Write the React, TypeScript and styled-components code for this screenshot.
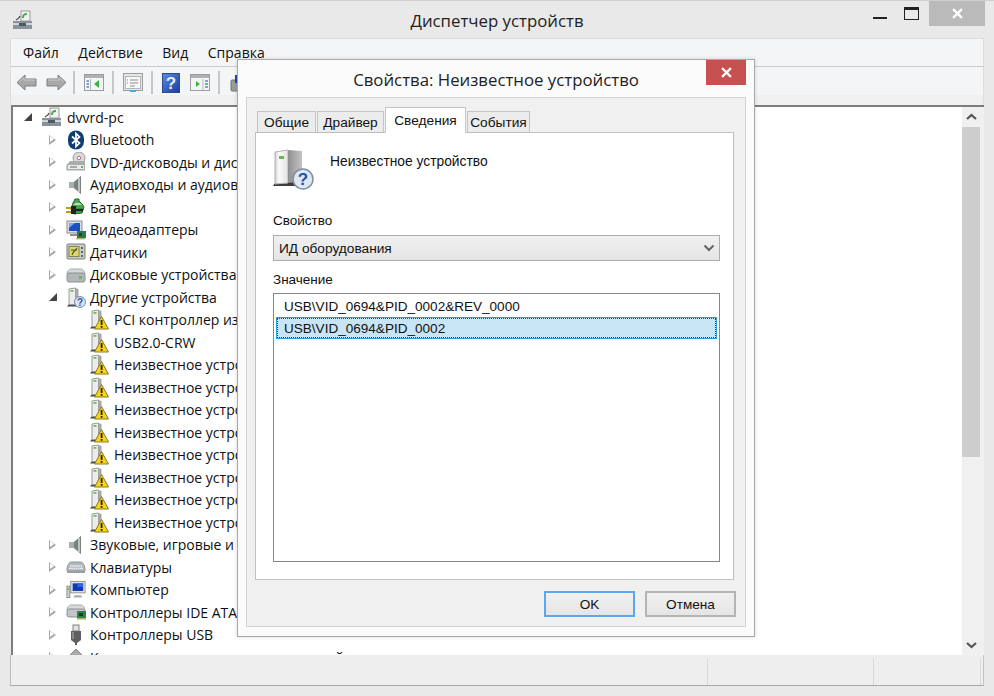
import { FC, ReactNode } from "react";
import styled, { createGlobalStyle } from "styled-components";

const GlobalStyle = createGlobalStyle`
  html, body {
    margin: 0;
    padding: 0;
    background: #e9e9e9;
  }
`;

type IconName =
  | "computer" | "bluetooth" | "dvd" | "audio" | "battery" | "video" | "sensor"
  | "disk" | "other" | "warn" | "sound" | "keyboard" | "pc" | "ide" | "usb" | "storage";

interface TreeRow {
  label: string;
  icon: IconName;
  level: 0 | 1 | 2;
  open?: boolean;
}

const unknown = "Неизвестное устройство";

const rows: TreeRow[] = [
  { label: "dvvrd-pc", icon: "computer", level: 0, open: true },
  { label: "Bluetooth", icon: "bluetooth", level: 1 },
  { label: "DVD-дисководы и дисководы компакт-дисков", icon: "dvd", level: 1 },
  { label: "Аудиовходы и аудиовыходы", icon: "audio", level: 1 },
  { label: "Батареи", icon: "battery", level: 1 },
  { label: "Видеоадаптеры", icon: "video", level: 1 },
  { label: "Датчики", icon: "sensor", level: 1 },
  { label: "Дисковые устройства", icon: "disk", level: 1 },
  { label: "Другие устройства", icon: "other", level: 1, open: true },
  { label: "PCI контроллер изохронной передачи", icon: "warn", level: 2 },
  { label: "USB2.0-CRW", icon: "warn", level: 2 },
  { label: unknown, icon: "warn", level: 2 },
  { label: unknown, icon: "warn", level: 2 },
  { label: unknown, icon: "warn", level: 2 },
  { label: unknown, icon: "warn", level: 2 },
  { label: unknown, icon: "warn", level: 2 },
  { label: unknown, icon: "warn", level: 2 },
  { label: unknown, icon: "warn", level: 2 },
  { label: unknown, icon: "warn", level: 2 },
  { label: "Звуковые, игровые и видеоустройства", icon: "sound", level: 1 },
  { label: "Клавиатуры", icon: "keyboard", level: 1 },
  { label: "Компьютер", icon: "pc", level: 1 },
  { label: "Контроллеры IDE ATA/ATAPI", icon: "ide", level: 1 },
  { label: "Контроллеры USB", icon: "usb", level: 1 },
  { label: "Контроллеры запоминающих устройств", icon: "storage", level: 1 },
];

const tabs = [
  { label: "Общие", width: 59 },
  { label: "Драйвер", width: 67 },
  { label: "Сведения", width: 81, active: true },
  { label: "События", width: 63 },
];

const Sketch: FC<{ size?: number; w?: number; h?: number; children: ReactNode }> = ({ size = 20, w, h, children }) => (
  <svg width={w ?? size} height={h ?? size} viewBox={`0 0 ${w ?? size} ${h ?? size}`} style={{ display: "block" }}>
    {children}
  </svg>
);

// tower with a green lamp, shared by the "unknown device" icons
const Tower = () => (
  <>
    <path d="M1 19.5 L3 17 H13 L14 19.5 Z" fill="#4a4a4a" />
    <path d="M3 2 L9.5 1 V17.5 H3 Z" fill="#ececec" stroke="#9a9a9a" strokeWidth="1" />
    <path d="M9.5 1 L12.5 2 V17 L9.5 17.5 Z" fill="#a8a8a8" />
    <rect x="4.5" y="3" width="3" height="1.8" fill="#6cc04a" />
  </>
);

const DeviceIcon: FC<{ name: IconName }> = ({ name }) => {
  switch (name) {
    case "computer":
      return (
        <Sketch w={21} h={20}>
          <rect x="9" y="1" width="9" height="10" fill="#f2f2f2" stroke="#9b9b9b" />
          <path d="M11 8 C11 4 13 4 15 4" fill="none" stroke="#4aa84a" strokeWidth="2" />
          <path d="M8 6 C7 9 5 9 4 10" fill="none" stroke="#555" strokeWidth="1.4" />
          <path d="M1 11 H20 V19 H1 Z" fill="#87929b" />
          <path d="M1 14 H20" stroke="#e6e9ea" strokeWidth="1.5" />
          <rect x="7" y="13" width="7" height="3" fill="#4e5a63" />
        </Sketch>
      );
    case "bluetooth":
      return (
        <Sketch w={18} h={20}>
          <rect x="1" y="0.5" width="16" height="19" rx="8" fill="#113e72" />
          <path d="M5 6.5 L12.5 13 L9 16.5 V3.5 L12.5 7 L5 13.5" fill="none" stroke="#fff" strokeWidth="1.7" />
        </Sketch>
      );
    case "dvd":
      return (
        <Sketch>
          <circle cx="13" cy="6" r="6" fill="#dcd7dc" stroke="#9b9b9b" />
          <circle cx="13" cy="6" r="1.7" fill="#fff" stroke="#a77" />
          <path d="M0.5 13 L4 9 H19 V18.5 H0.5 Z" fill="#a6adaa" />
          <rect x="2" y="13" width="16" height="4" fill="#e9ecea" />
          <rect x="4" y="14.5" width="7" height="1" fill="#666" />
          <rect x="15" y="14" width="2" height="2" fill="#62b34a" />
        </Sketch>
      );
    case "audio":
    case "sound":
      return (
        <Sketch w={16} h={20}>
          <path d="M1 7 H6 L13 1 V19 L6 13 H1 Z" fill="#a9aeae" />
          <path d="M6 7 L13 1 V19 L6 13 Z" fill="#7a7f80" />
          <path d="M11 3 V17" stroke="#d5d8d8" strokeWidth="1.5" />
        </Sketch>
      );
    case "battery":
      return (
        <Sketch>
          <path d="M9 2 H13 V4 L16 7 L18 10 L16 16 L8 17 L5 12 L7 6 Z" fill="#46a84c" stroke="#1e6a2a" />
          <path d="M7 8 C10 5 13 5 16 8" fill="#c8d6cc" />
          <path d="M0 11 H5 M0 15 H5" stroke="#b89a20" strokeWidth="2" />
          <path d="M5 9 H10 V17 H5 Z" fill="#222" />
          <path d="M10 13 H17" stroke="#222" strokeWidth="2.4" />
        </Sketch>
      );
    case "video":
      return (
        <Sketch w={20} h={20}>
          <rect x="1" y="1" width="15" height="12" fill="#d8dcdf" stroke="#8b8f92" />
          <rect x="3" y="3" width="11" height="8" fill="#1b4fc2" />
          <path d="M3 3 H9 L3 8 Z" fill="#79a7ec" />
          <path d="M4 15 H13" stroke="#8d9193" strokeWidth="2" />
          <rect x="11" y="11" width="9" height="7" fill="#2e7a4e" />
          <rect x="13" y="13" width="3" height="3" fill="#174a2c" />
          <rect x="10" y="18" width="9" height="1.4" fill="#c2b15a" />
        </Sketch>
      );
    case "sensor":
      return (
        <Sketch w={20} h={18}>
          <rect x="1" y="1" width="18" height="15" rx="1" fill="#c8cdc6" stroke="#7c807a" />
          <rect x="3" y="3.5" width="10" height="10" fill="#dcd968" stroke="#84845a" />
          <path d="M5 7 H11 M7 10 L11 5 M6 12 L8 8" stroke="#51512c" strokeWidth="1.2" />
          <rect x="15" y="4" width="2" height="2" fill="#666" />
          <rect x="15" y="8" width="2" height="2" fill="#666" />
          <rect x="15" y="12" width="2" height="2" fill="#666" />
        </Sketch>
      );
    case "disk":
      return (
        <Sketch w={20} h={16}>
          <path d="M1 7 C2 2 4 2 6 2 H14 C17 2 18 3 19 7 Z" fill="#d7dadc" stroke="#a5a9ac" />
          <rect x="1" y="6" width="18" height="9" rx="2" fill="#b2b7b9" stroke="#8c9093" />
          <rect x="13" y="9" width="3" height="3" fill="#67b84c" />
        </Sketch>
      );
    case "other":
      return (
        <Sketch w={20} h={21}>
          <Tower />
          <circle cx="14" cy="15" r="5.5" fill="#d8e2f0" stroke="#7d8ea6" />
          <text x="14" y="18.5" textAnchor="middle" fontSize="10" fontWeight="700" fontFamily="Liberation Sans" fill="#2b56a8">?</text>
        </Sketch>
      );
    case "warn":
      return (
        <Sketch w={20} h={21}>
          <Tower />
          <path d="M12.5 7.5 L19.5 20 H5.5 Z" fill="#f7d31a" stroke="#8a7a1c" strokeLinejoin="round" />
          <rect x="11.7" y="11" width="1.8" height="5" fill="#222" />
          <rect x="11.7" y="17" width="1.8" height="1.8" fill="#222" />
        </Sketch>
      );
    case "keyboard":
      return (
        <Sketch w={20} h={14}>
          <path d="M1 11 C1 5 3 2 6 2 H14 C17 2 19 5 19 11 Z" fill="#b3babf" stroke="#8e9499" />
          <path d="M4 6 H16 M3 8.5 H17" stroke="#eef0f2" strokeWidth="1.3" strokeDasharray="1.5 0.7" />
          <rect x="1" y="11" width="18" height="2" fill="#9aa0a5" />
        </Sketch>
      );
    case "pc":
      return (
        <Sketch w={21} h={20}>
          <rect x="1" y="6" width="3" height="12" fill="#d2d6d8" stroke="#87898b" />
          <rect x="1.8" y="8" width="1.4" height="2" fill="#5cb846" />
          <rect x="5" y="1" width="15" height="12" fill="#dfe2e4" stroke="#8e9295" />
          <rect x="7" y="3" width="11" height="8" fill="#1138b5" />
          <path d="M12 3 H18 V7 H12 Z" fill="#2f66df" />
          <path d="M9 15.5 H16 L17 18 H8 Z" fill="#a7abae" />
        </Sketch>
      );
    case "ide":
      return (
        <Sketch w={20} h={18}>
          <path d="M1 7 C2 2 4 2 6 2 H14 C17 2 18 3 19 7 Z" fill="#d8dbdd" stroke="#a5a9ac" />
          <rect x="1" y="6" width="18" height="8" rx="2" fill="#c2c6c9" stroke="#8c9093" />
          <rect x="11" y="8" width="9" height="7" fill="#2f7f50" />
          <rect x="13" y="10" width="4" height="3" fill="#123f22" />
          <rect x="11" y="15" width="9" height="1.6" fill="#c2b15a" />
        </Sketch>
      );
    case "usb":
      return (
        <Sketch w={12} h={22}>
          <rect x="3" y="1" width="6" height="6" fill="#e3e3e3" stroke="#7f7f7f" />
          <path d="M1 7 H11 V16 L7 19 V21 H5 V19 L1 16 Z" fill="#5d5f60" />
          <path d="M3 8 V15" stroke="#96999a" strokeWidth="1.5" />
        </Sketch>
      );
    case "storage":
      return (
        <Sketch w={18} h={18}>
          <path d="M9 1 L17 9 H1 Z" fill="#a9acae" stroke="#85888a" />
          <rect x="2" y="9" width="14" height="8" fill="#8f9396" />
        </Sketch>
      );
  }
};

const NavArrow: FC<{ flip?: boolean }> = ({ flip }) => (
  <svg width="21" height="17" viewBox="0 0 21 17" style={{ display: "block", transform: flip ? "scaleX(-1)" : undefined }}>
    <path d="M1 8.5 L9 1 V5 H20 V12 H9 V16 Z" fill="#a8a8a8" stroke="#7f7f7f" strokeLinejoin="round" />
    <path d="M3 8 L8 3.5 V6 H19" fill="none" stroke="#c9c9c9" />
  </svg>
);

const PaneIcon: FC<{ right?: boolean }> = ({ right }) => (
  <svg width="20" height="17" viewBox="0 0 20 17" style={{ display: "block" }}>
    <rect x="0.5" y="0.5" width="19" height="16" fill="#f4f5f5" stroke="#9a9c9e" />
    <rect x="1" y="1" width="18" height="3" fill="#aeb2b5" />
    {right ? (
      <>
        <path d="M6 7 L10 10 L6 13 Z" fill="#38b54a" />
        <path d="M13 5 V16" stroke="#b5b7b9" />
        <path d="M15 7 H18 M15 10 H18 M15 13 H18" stroke="#5d86bd" strokeWidth="1.5" />
      </>
    ) : (
      <>
        <path d="M6.5 5 V16" stroke="#b5b7b9" />
        <path d="M2.5 7 H5 M2.5 10 H5 M2.5 13 H5" stroke="#5d86bd" strokeWidth="1.5" />
        <path d="M15 6 L10 10 L15 14 Z" fill="#38b54a" />
      </>
    )}
  </svg>
);

const PropsIcon = () => (
  <svg width="20" height="20" viewBox="0 0 20 20" style={{ display: "block" }}>
    <rect x="0.5" y="0.5" width="19" height="17" fill="#e4e6e6" stroke="#9a9c9e" />
    <rect x="2.5" y="3.5" width="15" height="12" fill="#f7f7f7" stroke="#b3b5b6" />
    <path d="M7 7 H15 M7 10 H15 M7 13 H12" stroke="#8d9093" />
    <path d="M4 7 H5 M4 10 H5" stroke="#5d86bd" />
    <rect x="7" y="17" width="6" height="2" fill="#3db4e8" />
  </svg>
);

const HelpIcon = () => (
  <svg width="18" height="20" viewBox="0 0 18 20" style={{ display: "block" }}>
    <defs>
      <linearGradient id="helpFill" x1="0" y1="0" x2="1" y2="1">
        <stop offset="0" stopColor="#5c8fe0" />
        <stop offset="1" stopColor="#183c9c" />
      </linearGradient>
    </defs>
    <rect x="0.5" y="0.5" width="17" height="19" fill="url(#helpFill)" stroke="#2c4a94" />
    <text x="9" y="16" textAnchor="middle" fontSize="17" fontWeight="700" fontFamily="Liberation Sans" fill="#e8eef8">?</text>
  </svg>
);

const DeviceToolIcon = () => (
  <svg width="16" height="20" viewBox="0 0 16 20" style={{ display: "block" }}>
    <rect x="1" y="7" width="7" height="11" rx="1" fill="#9a9d9f" stroke="#6f7274" />
    <rect x="5" y="2" width="7" height="8" fill="#1d45b8" />
  </svg>
);

const BigDeviceIcon = () => (
  <svg width="42" height="42" viewBox="0 0 42 42" style={{ display: "block" }}>
    <defs>
      <linearGradient id="bigTower" x1="0" y1="0" x2="1" y2="0">
        <stop offset="0" stopColor="#cfcfcf" />
        <stop offset="0.3" stopColor="#fbfbfb" />
        <stop offset="1" stopColor="#e2e2e2" />
      </linearGradient>
      <linearGradient id="bigTowerSide" x1="0" y1="0" x2="1" y2="0">
        <stop offset="0" stopColor="#8f8f8f" />
        <stop offset="1" stopColor="#c4c4c4" />
      </linearGradient>
    </defs>
    <path d="M0 38 L4 32 H28 V38 Z" fill="#3c3c3c" />
    <path d="M2 4 L15 2 V35 L2 36 Z" fill="url(#bigTower)" stroke="#b4b4b4" />
    <path d="M15 2 L29 3 V33 L15 35 Z" fill="url(#bigTowerSide)" />
    <path d="M6 8 H11 V11 H6 Z" fill="#66b848" />
    <circle cx="30" cy="31" r="10" fill="#dfe7f2" stroke="#7f8ea3" strokeWidth="1.5" />
    <text x="30" y="37" textAnchor="middle" fontSize="17" fontWeight="700" fontFamily="Liberation Sans" fill="#2452a8">?</text>
  </svg>
);

const CloseGlyph: FC<{ size?: number }> = ({ size = 10 }) => (
  <svg width={size} height={size} viewBox="0 0 10 10" style={{ display: "block" }}>
    <path d="M1 1 L9 9 M9 1 L1 9" stroke="#fff" strokeWidth="2" />
  </svg>
);

const ScrollArrow: FC<{ down?: boolean }> = ({ down }) => (
  <svg width="11" height="8" viewBox="0 0 11 8" style={{ display: "block" }}>
    <path d={down ? "M1 2 L5.5 6 L10 2" : "M1 6 L5.5 2 L10 6"} fill="none" stroke="#555" strokeWidth="2.2" />
  </svg>
);

const App: FC = () => (
  <>
    <GlobalStyle />
    <Win>
      <TitleBar>
        <AppIcon>
          <DeviceIcon name="computer" />
        </AppIcon>
        <TitleText>Диспетчер устройств</TitleText>
        <Controls>
          <Minimize />
          <Maximize />
          <CloseBtn>
            <CloseGlyph size={11} />
          </CloseBtn>
        </Controls>
      </TitleBar>

      <Client>
        <MenuBar>
          <MenuItem>Файл</MenuItem>
          <MenuItem>Действие</MenuItem>
          <MenuItem>Вид</MenuItem>
          <MenuItem>Справка</MenuItem>
        </MenuBar>
        <Toolbar>
          <ToolSlot $w={30}><NavArrow /></ToolSlot>
          <ToolSlot $w={30}><NavArrow flip /></ToolSlot>
          <ToolSep $left={2} />
          <ToolSlot $w={37}><PaneIcon /></ToolSlot>
          <ToolSep />
          <ToolSlot $w={37}><PropsIcon /></ToolSlot>
          <ToolSep />
          <ToolSlot $w={36}><HelpIcon /></ToolSlot>
          <ToolSlot $w={22}><PaneIcon right /></ToolSlot>
          <ToolSep $left={7} />
          <ToolSlot $w={36}><DeviceToolIcon /></ToolSlot>
        </Toolbar>
        <ToolStrip />
        <TreeArea>
          <TreeList>
            {rows.map((row, i) => (
              <Row key={i} $level={row.level}>
                {row.level < 2 && <Expander $open={row.open} />}
                <IconBox $level={row.level}>
                  <DeviceIcon name={row.icon} />
                </IconBox>
                <RowLabel>{row.label}</RowLabel>
              </Row>
            ))}
          </TreeList>
          <ScrollBar>
            <ScrollBtn><ScrollArrow /></ScrollBtn>
            <ScrollThumb />
            <ScrollTrack />
            <ScrollBtn><ScrollArrow down /></ScrollBtn>
          </ScrollBar>
        </TreeArea>
        <StatusBar>
          <StatusCell $grow />
          <StatusCell $w={166} />
          <StatusCell $w={107} />
        </StatusBar>
      </Client>

      <Dialog>
        <DialogHead>
          <DialogTitle>Свойства: Неизвестное устройство</DialogTitle>
          <DialogClose>
            <CloseGlyph size={11} />
          </DialogClose>
        </DialogHead>
        <DialogBody>
          <TabRow>
            {tabs.map((tab) => (
              <Tab key={tab.label} $w={tab.width} $active={tab.active}>
                {tab.label}
              </Tab>
            ))}
          </TabRow>
          <TabPanel>
            <DeviceHead>
              <BigDeviceIcon />
              <DeviceName>Неизвестное устройство</DeviceName>
            </DeviceHead>
            <FieldLabel>Свойство</FieldLabel>
            <SelectBox>
              <span>ИД оборудования</span>
              <svg width="12" height="8" viewBox="0 0 12 8">
                <path d="M1.5 1.5 L6 6 L10.5 1.5" fill="none" stroke="#666" strokeWidth="2" />
              </svg>
            </SelectBox>
            <ValueLabel>Значение</ValueLabel>
            <ListBox>
              <ListRow>USB\VID_0694&amp;PID_0002&amp;REV_0000</ListRow>
              <ListRow $selected>USB\VID_0694&amp;PID_0002</ListRow>
            </ListBox>
          </TabPanel>
          <ButtonRow>
            <DlgButton $primary>OK</DlgButton>
            <DlgButton>Отмена</DlgButton>
          </ButtonRow>
        </DialogBody>
      </Dialog>
    </Win>
  </>
);

const uiFont = `"Open Sans", "Noto Sans", sans-serif`;
const dlgFont = `"Liberation Sans", Arial, sans-serif`;

const Win = styled.div`
  position: relative;
  width: 994px;
  height: 696px;
  box-sizing: border-box;
  display: flex;
  flex-direction: column;
  background: #e9e9e9;
  border-top: 1px solid #cfcfcf;
  overflow: hidden;
  font-family: ${uiFont};
  color: #111;
`;

const TitleBar = styled.div`
  position: relative;
  height: 37px;
  flex: none;
  display: flex;
  align-items: flex-start;
  justify-content: center;
`;

const AppIcon = styled.div`
  position: absolute;
  left: 12px;
  top: 9px;
`;

const TitleText = styled.div`
  margin-top: 8px;
  font-size: 16.8px;
  line-height: 24px;
  color: #222;
`;

const Controls = styled.div`
  position: absolute;
  right: 9px;
  top: 0;
  display: flex;
  align-items: flex-start;
`;

const Minimize = styled.div`
  width: 14px;
  height: 2px;
  margin: 16px 17px 0 0;
  background: #222;
`;

const Maximize = styled.div`
  width: 13px;
  height: 9px;
  margin: 6px 10px 0 0;
  border: 1px solid #222;
  border-top-width: 3px;
`;

const CloseBtn = styled.div`
  width: 56px;
  height: 25px;
  background: #bababa;
  display: flex;
  align-items: center;
  justify-content: center;
`;

const Client = styled.div`
  flex: 1;
  min-height: 0;
  display: flex;
  flex-direction: column;
  margin: 0 10px 10px;
  border-top: 1px solid #dcdde0;
`;

const MenuBar = styled.div`
  height: 27px;
  flex: none;
  display: flex;
  align-items: center;
  gap: 19.5px;
  padding-left: 12px;
  background: #f4f5f7;
  border-left: 1px solid #dcdde0;
  border-right: 1px solid #dcdde0;
  border-bottom: 1px solid #c9cbce;
`;

const MenuItem = styled.span`
  font-size: 14px;
`;

const Toolbar = styled.div`
  height: 28px;
  flex: none;
  box-sizing: border-box;
  padding-top: 3px;
  display: flex;
  align-items: center;
  background: #f4f5f7;
  border-left: 1px solid #dcdde0;
  border-right: 1px solid #dcdde0;
`;

const ToolSlot = styled.div<{ $w: number }>`
  width: ${(p) => p.$w}px;
  flex: none;
  display: flex;
  justify-content: center;
`;

const ToolSep = styled.div<{ $left?: number }>`
  width: 2px;
  height: 23px;
  flex: none;
  margin-left: ${(p) => p.$left ?? 0}px;
  background: #c4c6c8;
`;

const ToolStrip = styled.div`
  height: 10px;
  flex: none;
  background: #f0f0f0;
  border-left: 1px solid #dcdde0;
  border-right: 1px solid #dcdde0;
`;

const TreeArea = styled.div`
  flex: 1;
  min-height: 0;
  display: flex;
  background: #fff;
  border-top: 2px solid #7d7d7d;
  border-left: 2px solid #7d7d7d;
  margin-left: 1px;
`;

const TreeList = styled.div`
  flex: 1;
  min-width: 0;
  margin-top: -1px;
  overflow: hidden;
`;

const rowIndent = [11, 36, 76];
const iconGap = [5, 4, 5];

const Row = styled.div<{ $level: number }>`
  height: 22.5px;
  box-sizing: border-box;
  display: flex;
  align-items: center;
  padding-left: ${(p) => rowIndent[p.$level]}px;
`;

const Expander = styled.span<{ $open?: boolean }>`
  width: 0;
  height: 0;
  flex: none;
  ${(p) =>
    p.$open
      ? `
    margin-right: 9px;
    border-style: solid;
    border-width: 0 0 8px 8px;
    border-color: transparent transparent #444 transparent;
  `
      : `
    position: relative;
    margin-right: 10px;
    border-style: solid;
    border-width: 5.5px 0 5.5px 7px;
    border-color: transparent transparent transparent #a6a6a6;
    &::after {
      content: "";
      position: absolute;
      left: -6px;
      top: -3.8px;
      border-style: solid;
      border-width: 3.8px 0 3.8px 4.8px;
      border-color: transparent transparent transparent #fff;
    }
  `}
`;

const IconBox = styled.div<{ $level: number }>`
  width: ${(p) => (p.$level === 0 ? 21 : 20)}px;
  flex: none;
  margin-right: ${(p) => iconGap[p.$level]}px;
  display: flex;
  justify-content: center;
`;

const RowLabel = styled.span`
  font-size: 14px;
  white-space: nowrap;
`;

const ScrollBar = styled.div`
  width: 18px;
  flex: none;
  display: flex;
  flex-direction: column;
  background: #f0f0f0;
  border-right: 4px solid #f0f0f0;
`;

const ScrollBtn = styled.div`
  height: 20px;
  flex: none;
  display: flex;
  align-items: center;
  justify-content: center;
`;

const ScrollThumb = styled.div`
  height: 330px;
  flex: none;
  background: #cdcdcd;
`;

const ScrollTrack = styled.div`
  flex: 1;
`;

const StatusBar = styled.div`
  height: 31px;
  flex: none;
  box-sizing: border-box;
  display: flex;
  padding: 4px 2px 0 0;
  background: #eeeeee;
  border-left: 1px solid #bdbdbd;
  border-right: 1px solid #c4c4c4;
  border-bottom: 1px solid #a8a8a8;
`;

const StatusCell = styled.div<{ $grow?: boolean; $w?: number }>`
  flex: ${(p) => (p.$grow ? 1 : "none")};
  box-sizing: border-box;
  width: ${(p) => p.$w ?? 0}px;
  border-right: 1px solid #d9d9d9;
`;

const Dialog = styled.div`
  position: absolute;
  left: 237px;
  top: 58px;
  width: 518px;
  height: 578px;
  box-sizing: border-box;
  display: flex;
  flex-direction: column;
  padding: 0 8px 9px;
  background: #fbfbfb;
  border: 1px solid #a9a9a9;
  box-shadow: 0 0 4px rgba(0, 0, 0, 0.15);
`;

const DialogHead = styled.div`
  position: relative;
  height: 37px;
  flex: none;
  display: flex;
  justify-content: center;
`;

const DialogTitle = styled.div`
  margin-top: 8px;
  font-size: 16.8px;
  line-height: 24px;
  color: #222;
`;

const DialogClose = styled.div`
  position: absolute;
  right: 0;
  top: 0;
  width: 40px;
  height: 25px;
  background: #c75050;
  display: flex;
  align-items: center;
  justify-content: center;
`;

const DialogBody = styled.div`
  flex: 1;
  min-height: 0;
  display: flex;
  flex-direction: column;
  padding: 9px 11px 9px 8px;
  background: #f0f0f0;
  border: 1px solid #d3d3d3;
  font-family: ${dlgFont};
`;

const TabRow = styled.div`
  height: 26px;
  flex: none;
  display: flex;
  align-items: flex-end;
  gap: 1px;
  padding-left: 2px;
  margin-bottom: -1px;
  position: relative;
  z-index: 1;
`;

const Tab = styled.div<{ $w: number; $active?: boolean }>`
  width: ${(p) => p.$w}px;
  height: ${(p) => (p.$active ? 26 : 22)}px;
  box-sizing: border-box;
  display: flex;
  align-items: center;
  justify-content: center;
  font-size: 13.7px;
  background: ${(p) => (p.$active ? "#fff" : "#ececec")};
  border: 1px solid #c4c4c4;
  border-bottom: ${(p) => (p.$active ? "1px solid #fff" : "1px solid #bdbdbd")};
`;

const TabPanel = styled.div`
  flex: 1;
  min-height: 0;
  display: flex;
  flex-direction: column;
  padding: 15px 13px 17px 17px;
  background: #fff;
  border: 1px solid #c0c0c0;
`;

const DeviceHead = styled.div`
  height: 42px;
  flex: none;
  display: flex;
  align-items: flex-start;
  gap: 15px;
`;

const DeviceName = styled.div`
  margin-top: 6px;
  font-size: 13.8px;
  line-height: 16px;
`;

const FieldLabel = styled.div`
  margin-top: 23px;
  font-size: 13.5px;
  line-height: 16px;
`;

const ValueLabel = styled(FieldLabel)`
  margin-top: 11px;
`;

const SelectBox = styled.div`
  height: 26px;
  flex: none;
  box-sizing: border-box;
  margin-top: 6px;
  display: flex;
  align-items: center;
  justify-content: space-between;
  padding: 0 4px 0 5px;
  font-size: 13.7px;
  background: linear-gradient(#f0f0f0, #e5e5e5);
  border: 1px solid #acacac;
`;

const ListBox = styled.div`
  flex: 1;
  min-height: 0;
  box-sizing: border-box;
  margin-top: 5px;
  padding: 1px 2px;
  border: 1px solid #828790;
`;

const ListRow = styled.div<{ $selected?: boolean }>`
  height: 22px;
  box-sizing: border-box;
  display: flex;
  align-items: center;
  padding-left: 7px;
  font-size: 13.55px;
  background: ${(p) => (p.$selected ? "#c7e5f5" : "transparent")};
  border: 1px ${(p) => (p.$selected ? "solid #26a0da" : "solid transparent")};
  outline: ${(p) => (p.$selected ? "1px dotted #444" : "none")};
  outline-offset: -2px;
`;

const ButtonRow = styled.div`
  height: 26px;
  flex: none;
  margin: 11px -2px 0 0;
  display: flex;
  justify-content: flex-end;
  gap: 10px;
`;

const DlgButton = styled.div<{ $primary?: boolean }>`
  width: 91px;
  box-sizing: border-box;
  display: flex;
  align-items: center;
  justify-content: center;
  font-size: 13.6px;
  background: linear-gradient(#f0f0f0, #e5e5e5);
  border: ${(p) => (p.$primary ? "2px solid #5aa7f0" : "2px solid #b4b4b4")};
`;

export default App;
